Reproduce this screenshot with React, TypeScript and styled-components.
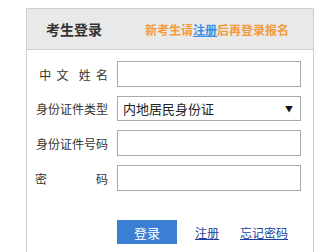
import React from "react";
import styled, { createGlobalStyle } from "styled-components";

const Global = createGlobalStyle`
  html, body { margin: 0; padding: 0; background: #fff; }
  body { font-family: "Noto Sans CJK SC", "Microsoft YaHei", sans-serif; overflow: hidden; }
`;

const Page = styled.div`
  padding: 8px 0 0 26px;
`;

const Panel = styled.div`
  width: 288px;
  height: 244px;
  box-sizing: border-box;
  border: 1px solid #cfcfcf;
  border-bottom: none;
`;

const Header = styled.div`
  height: 41px;
  background: #e9e9e9;
  border-bottom: 1px solid #cfcfcf;
  display: flex;
  align-items: center;
  padding-left: 19px;
  box-sizing: border-box;
`;

const Title = styled.div`
  font-size: 14px;
  font-weight: bold;
  color: #333;
  width: 99px;
`;

const Notice = styled.div`
  font-size: 12px;
  font-weight: bold;
  color: #f29a3c;
`;

const NoticeLink = styled.a`
  color: #3b8ee8;
  text-decoration: underline;
`;

const Form = styled.div`
  padding: 11px 0 0 8px;
  display: flex;
  flex-direction: column;
  gap: 9px;
`;

const Row = styled.div`
  display: flex;
  align-items: center;
  gap: 9px;
`;

const Label = styled.div<{ $justify?: boolean }>`
  width: 73px;
  font-size: 12px;
  color: #333;
  white-space: pre;
  word-spacing: ${(p) => (p.$justify ? 0 : 2.5)}px;
  text-align: ${(p) => (p.$justify ? "justify" : "right")};
  text-align-last: ${(p) => (p.$justify ? "justify" : "right")};
`;

const Input = styled.div<{ $h?: number }>`
  width: 184px;
  height: ${(p) => p.$h ?? 26}px;
  box-sizing: border-box;
  border: 1px solid #a9a9a9;
  background: #fff;
  display: flex;
  align-items: center;
  justify-content: space-between;
  padding: 0 7px 0 5px;
  font-size: 13px;
  color: #222;
`;

const Arrow = styled.span`
  font-size: 8px;
  color: #111;
`;

const Actions = styled.div`
  display: flex;
  align-items: center;
  padding: 29px 0 0 90px;
`;

const Button = styled.div`
  width: 60px;
  height: 24px;
  background: #3a7fd3;
  color: #fff;
  font-size: 13px;
  display: flex;
  align-items: center;
  justify-content: center;
`;

const Link = styled.a<{ $ml: number }>`
  margin-left: ${(p) => p.$ml}px;
  font-size: 12px;
  color: #1d3f9e;
  text-decoration: underline;
`;

export default function App() {
  return (
    <>
      <Global />
      <Page>
        <Panel>
          <Header>
            <Title>考生登录</Title>
            <Notice>
              新考生请<NoticeLink>注册</NoticeLink>后再登录报名
            </Notice>
          </Header>
          <Form>
            <Row>
              <Label>{"中 文  姓 名"}</Label>
              <Input />
            </Row>
            <Row>
              <Label>身份证件类型</Label>
              <Input $h={25}>
                内地居民身份证
                <Arrow>▼</Arrow>
              </Input>
            </Row>
            <Row>
              <Label>身份证件号码</Label>
              <Input />
            </Row>
            <Row>
              <Label $justify>密 码</Label>
              <Input />
            </Row>
          </Form>
          <Actions>
            <Button>登录</Button>
            <Link $ml={18}>注册</Link>
            <Link $ml={21}>忘记密码</Link>
          </Actions>
        </Panel>
      </Page>
    </>
  );
}
